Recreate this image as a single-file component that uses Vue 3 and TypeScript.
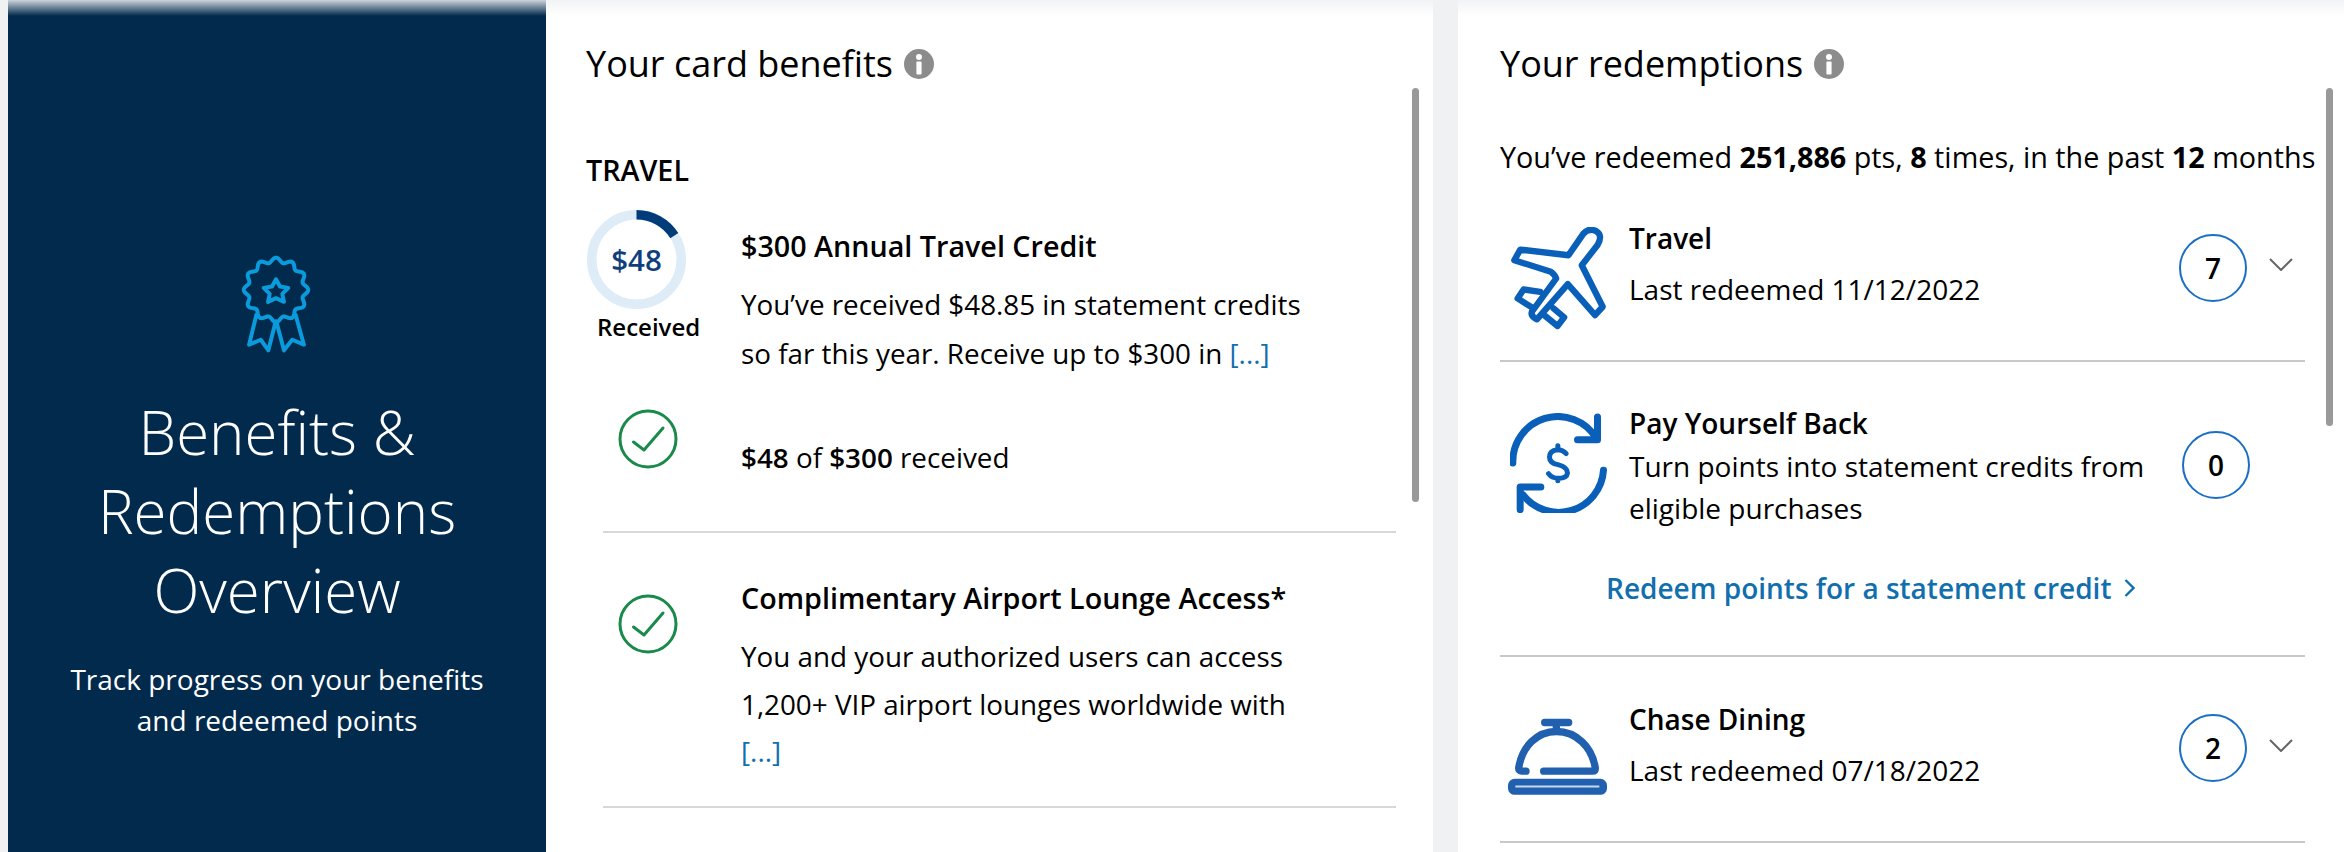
<script setup lang="ts">
const cx = 171
const cy = 150
let d = ''
for (let i = 0; i <= 240; i++) {
  const t = (i / 240) * Math.PI * 2
  const r = 90 + 7 * Math.cos(12 * t)
  const x = cx + r * Math.sin(t)
  const y = cy - r * Math.cos(t)
  d += (i === 0 ? 'M' : 'L') + x.toFixed(1) + ' ' + y.toFixed(1) + ' '
}
const scallop = d + 'Z'

const R = 49.5 - 4.75
const circ = 2 * Math.PI * R
const dash = `${(circ * 48) / 300} ${circ}`
</script>

<template>
  <div class="page">
    <div class="fade"></div>
    <aside class="hero">
      <svg class="award" viewBox="60 45 225 295" fill="none" stroke="#0a9bdc" stroke-width="12" stroke-linejoin="round" stroke-linecap="round">
        <path :d="scallop" />
        <path d="M171 118 L183 140 L208 144 L190 162 L195 186 L171 175 L147 186 L152 162 L134 144 L159 140 Z" />
        <path d="M112 225 L90 315 L125 300 L148 332 L170 245" />
        <path d="M230 225 L255 315 L220 300 L195 332 L172 245" />
      </svg>
      <h1 class="hero-title">Benefits &amp;<br />Redemptions<br />Overview</h1>
      <p class="hero-sub">Track progress on your benefits<br />and redeemed points</p>
    </aside>

    <section class="panel benefits">
      <h2 class="panel-title">Your card benefits
        <svg class="info" viewBox="0 0 30 30"><circle cx="15" cy="15" r="15" fill="#8c8c8c" /><circle cx="15" cy="8" r="3" fill="#fff" /><rect x="12.4" y="12.5" width="5.2" height="13" rx="1" fill="#fff" /></svg>
      </h2>
      <div class="category">TRAVEL</div>

      <div class="benefit-first">
        <div class="donut-col">
          <div class="donut">
            <svg viewBox="0 0 99 99" width="99" height="99">
              <circle cx="49.5" cy="49.5" :r="R" fill="none" stroke="#deecf7" stroke-width="9.5" />
              <circle cx="49.5" cy="49.5" :r="R" fill="none" stroke="#003b7a" stroke-width="9.5" :stroke-dasharray="dash" transform="rotate(-90 49.5 49.5)" />
            </svg>
            <span class="donut-value">$48</span>
          </div>
          <div class="donut-label">Received</div>
        </div>
        <div class="benefit-text first">
          <div class="benefit-name">$300 Annual Travel Credit</div>
          <p class="benefit-desc">You’ve received $48.85 in statement credits<br />so far this year. Receive up to $300 in <a class="more">[...]</a></p>
        </div>
      </div>

      <div class="progress-row">
        <svg class="check" viewBox="0 0 60 60" fill="none" stroke="#1a8a4a" stroke-width="3"><circle cx="30" cy="30" r="28" /><path d="M15.5 33 L26 41 L45 19" stroke-linecap="round" stroke-linejoin="round" /></svg>
        <div class="progress-text"><b>$48</b> of <b>$300</b> received</div>
      </div>
      <hr class="rule one" />

      <div class="benefit-second">
        <svg class="check second" viewBox="0 0 60 60" fill="none" stroke="#1a8a4a" stroke-width="3"><circle cx="30" cy="30" r="28" /><path d="M15.5 33 L26 41 L45 19" stroke-linecap="round" stroke-linejoin="round" /></svg>
        <div class="benefit-text">
          <div class="benefit-name">Complimentary Airport Lounge Access*</div>
          <p class="benefit-desc tight">You and your authorized users can access<br />1,200+ VIP airport lounges worldwide with<br /><a class="more">[...]</a></p>
        </div>
      </div>
      <hr class="rule two" />
      <div class="scrollbar left-bar"></div>
    </section>

    <section class="panel redemptions">
      <h2 class="panel-title">Your redemptions
        <svg class="info" viewBox="0 0 30 30"><circle cx="15" cy="15" r="15" fill="#8c8c8c" /><circle cx="15" cy="8" r="3" fill="#fff" /><rect x="12.4" y="12.5" width="5.2" height="13" rx="1" fill="#fff" /></svg>
      </h2>
      <p class="summary">You’ve redeemed <b>251,886</b> pts, <b>8</b> times, in the past <b>12</b> months</p>

      <div class="row travel">
        <svg class="ricon plane" viewBox="60 50 290 310" fill="none" stroke="#0a5fb8" stroke-width="19" stroke-linejoin="round" stroke-linecap="round">
          <path d="M235 135 L90 118 L72 150 L182 185 Q195 195 198 205 L125 305 Q120 318 140 328 L233 222 L315 315 L338 290 L275 165 L322 105 Q340 75 318 62 Q295 52 280 70 Z" />
          <path d="M150 245 L100 238 L82 265 L125 292" />
          <path d="M190 295 L222 322 L202 348 L165 318" />
        </svg>
        <div class="rtext">
          <div class="rname">Travel</div>
          <div class="rlast">Last redeemed 11/12/2022</div>
        </div>
        <div class="badge top-travel">7</div>
        <svg class="chev" viewBox="0 0 24 13" fill="none" stroke="#666" stroke-width="2"><path d="M1 1 L12 12 L23 1" /></svg>
      </div>
      <hr class="rule-r" />

      <div class="row pay">
        <svg class="ricon dollar" viewBox="60 40 290 300" fill="none" stroke="#0a5fb8" stroke-width="21" stroke-linecap="round" stroke-linejoin="round">
          <path d="M68 190 A135 135 0 0 1 318 115" />
          <path d="M322 52 V120 H262" />
          <path d="M340 212 A135 135 0 0 1 98 285" />
          <path d="M90 330 V262 H152" />
          <path stroke-width="15" d="M228 162 Q218 150 202 150 Q178 152 178 172 Q178 190 203 195 Q232 202 232 220 Q230 236 205 236 Q185 236 175 222 M203 138 V150 M203 236 V243" />
        </svg>
        <div class="rtext">
          <div class="rname">Pay Yourself Back</div>
          <div class="rdesc">Turn points into statement credits from<br />eligible purchases</div>
        </div>
        <div class="badge top-pay">0</div>
      </div>
      <a class="redeem">Redeem points for a statement credit
        <svg viewBox="0 0 11 18" width="11" height="18" fill="none" stroke="#126fae" stroke-width="2.4"><path d="M1.5 1 L9.5 9 L1.5 17" /></svg>
      </a>
      <hr class="rule-r" />

      <div class="row dining">
        <svg class="ricon bell" viewBox="55 55 303 233">
          <g fill="none" stroke="#2060ae" stroke-width="22" stroke-linecap="round" stroke-linejoin="round">
            <path d="M168 68 H240 M203 68 V90" />
            <path d="M112 214 H100 Q90 212 90 205 C100 140 145 95 203 95 C262 95 310 140 320 205 Q320 214 312 214 H165" />
          </g>
          <rect x="58" y="237" width="297" height="48" rx="20" fill="#2060ae" />
          <path d="M80 260 H332" stroke="#c8d8ee" stroke-width="6" />
        </svg>
        <div class="rtext">
          <div class="rname">Chase Dining</div>
          <div class="rlast">Last redeemed 07/18/2022</div>
        </div>
        <div class="badge top-dining">2</div>
        <svg class="chev" viewBox="0 0 24 13" fill="none" stroke="#666" stroke-width="2"><path d="M1 1 L12 12 L23 1" /></svg>
      </div>
      <hr class="rule-r" />
      <div class="scrollbar right-bar"></div>
    </section>
  </div>
</template>

<style>
html, body { margin: 0; background: #fff; }
</style>

<style scoped>
* { box-sizing: border-box; }
.page {
  position: relative;
  display: flex;
  width: 2344px;
  height: 852px;
  padding-left: 8px;
  overflow: hidden;
  background: #f0f1f3;
  font-family: "Open Sans", "Liberation Sans", sans-serif;
  color: #000;
}
.fade {
  position: absolute;
  inset: 0 0 auto 0;
  height: 16px;
  z-index: 2;
  background: linear-gradient(rgba(240, 241, 243, 0.85), rgba(240, 241, 243, 0));
}
.hero {
  width: 538px;
  flex: none;
  background: #012a4d;
  color: #fff;
  display: flex;
  flex-direction: column;
  align-items: center;
  padding-top: 255px;
}
.award { width: 75px; height: 98px; margin-left: -1px; }
.hero-title {
  margin: 40px 0 0;
  font-size: 60px;
  font-weight: 300;
  line-height: 79px;
  text-align: center;
}
.hero-sub {
  margin: 29px 0 0;
  font-size: 28px;
  line-height: 41px;
  text-align: center;
}
.panel {
  position: relative;
  background: #fff;
  height: 100%;
}
.benefits { width: 887px; flex: none; margin-right: 25px; padding: 40px 0 0 40px; }
.redemptions { flex: 1; padding: 40px 0 0 42px; }
.panel-title {
  margin: 0;
  display: flex;
  align-items: center;
  gap: 11px;
  font-size: 36px;
  font-weight: 400;
  line-height: 48px;
}
.info { width: 30px; height: 30px; flex: none; }
.category {
  margin-top: 66px;
  font-size: 28.7px;
  font-weight: 600;
  line-height: 32px;
}
.benefit-first { display: flex; }
.donut-col { width: 155px; flex: none; padding-top: 24px; }
.donut { position: relative; width: 99px; height: 99px; margin-left: 1px; }
.donut svg { display: block; }
.donut-value {
  position: absolute;
  inset: 0;
  display: flex;
  align-items: center;
  justify-content: center;
  font-size: 29.5px;
  font-weight: 600;
  color: #0f3e7e;
}
.donut-label {
  margin: 3px 0 0 11px;
  font-size: 24px;
  font-weight: 600;
  line-height: 30px;
}
.benefit-text.first { padding-top: 42px; }
.benefit-name {
  font-size: 28.7px;
  font-weight: 600;
  line-height: 36px;
}
.benefit-desc {
  margin: 16px 0 0;
  font-size: 27.8px;
  line-height: 48.5px;
}
.benefit-desc.tight { line-height: 47.5px; margin-top: 17px; }
.more { color: #126fae; }
.progress-row { display: flex; align-items: flex-start; margin-top: 32px; }
.check { width: 60px; height: 60px; flex: none; display: block; }
.progress-row .check { margin: 0 0 0 32px; }
.progress-text {
  margin: 30px 0 0 63px;
  font-size: 27.8px;
  line-height: 36px;
}
.progress-text b, .summary b { font-weight: 700; }
.progress-text b { font-weight: 600; }
.rule {
  margin: 0 0 0 17px;
  width: 793px;
  border: 0;
  border-top: 2px solid #d8d8d8;
}
.rule.one { margin-top: 56px; }
.benefit-second { display: flex; padding-top: 47px; }
.check.second { margin: 14px 63px 0 32px; }
.rule.two { margin-top: 30px; }
.scrollbar {
  position: absolute;
  top: 88px;
  width: 7px;
  border-radius: 4px;
  background: #999;
}
.left-bar { left: 866px; height: 414px; }
.right-bar { left: 868px; height: 338px; }
.summary {
  margin: 51px 0 0;
  font-size: 28.75px;
  line-height: 36px;
  white-space: nowrap;
}
.row { display: flex; align-items: flex-start; width: 805px; position: relative; }
.travel { padding-top: 45px; padding-bottom: 30px; }
.pay { padding-top: 43px; }
.dining { padding-top: 44px; padding-bottom: 45px; }
.ricon { flex: none; display: block; }
.plane { width: 97px; height: 103px; margin: 7px 22px 0 10px; }
.dollar { width: 97px; height: 100px; margin: 8px 22px 0 10px; }
.bell { width: 101px; height: 78px; margin: 17px 21px 0 7px; }
.rtext { flex: 1; }
.rname { font-size: 28px; font-weight: 600; line-height: 36px; }
.rlast { margin-top: 15px; font-size: 28px; line-height: 36px; }
.rdesc { margin-top: 4px; font-size: 28px; line-height: 42px; }
.badge {
  flex: none;
  width: 68px;
  height: 68px;
  border: 2px solid #1a6fc4;
  border-radius: 50%;
  display: flex;
  align-items: center;
  justify-content: center;
  font-size: 28px;
  font-weight: 600;
}
.top-travel { margin-top: 14px; }
.top-pay { margin: 26px 55px 0 0; }
.top-dining { margin-top: 13px; }
.chev { flex: none; width: 24px; height: 13px; margin: 38px 12px 0 22px; }
.rule-r {
  margin: 0;
  width: 805px;
  border: 0;
  border-top: 2px solid #c8c8c8;
}
.redeem {
  display: flex;
  align-items: center;
  gap: 13px;
  margin: 41px 0 49px 106px;
  font-size: 28px;
  font-weight: 600;
  line-height: 36px;
  color: #126fae;
}
</style>
